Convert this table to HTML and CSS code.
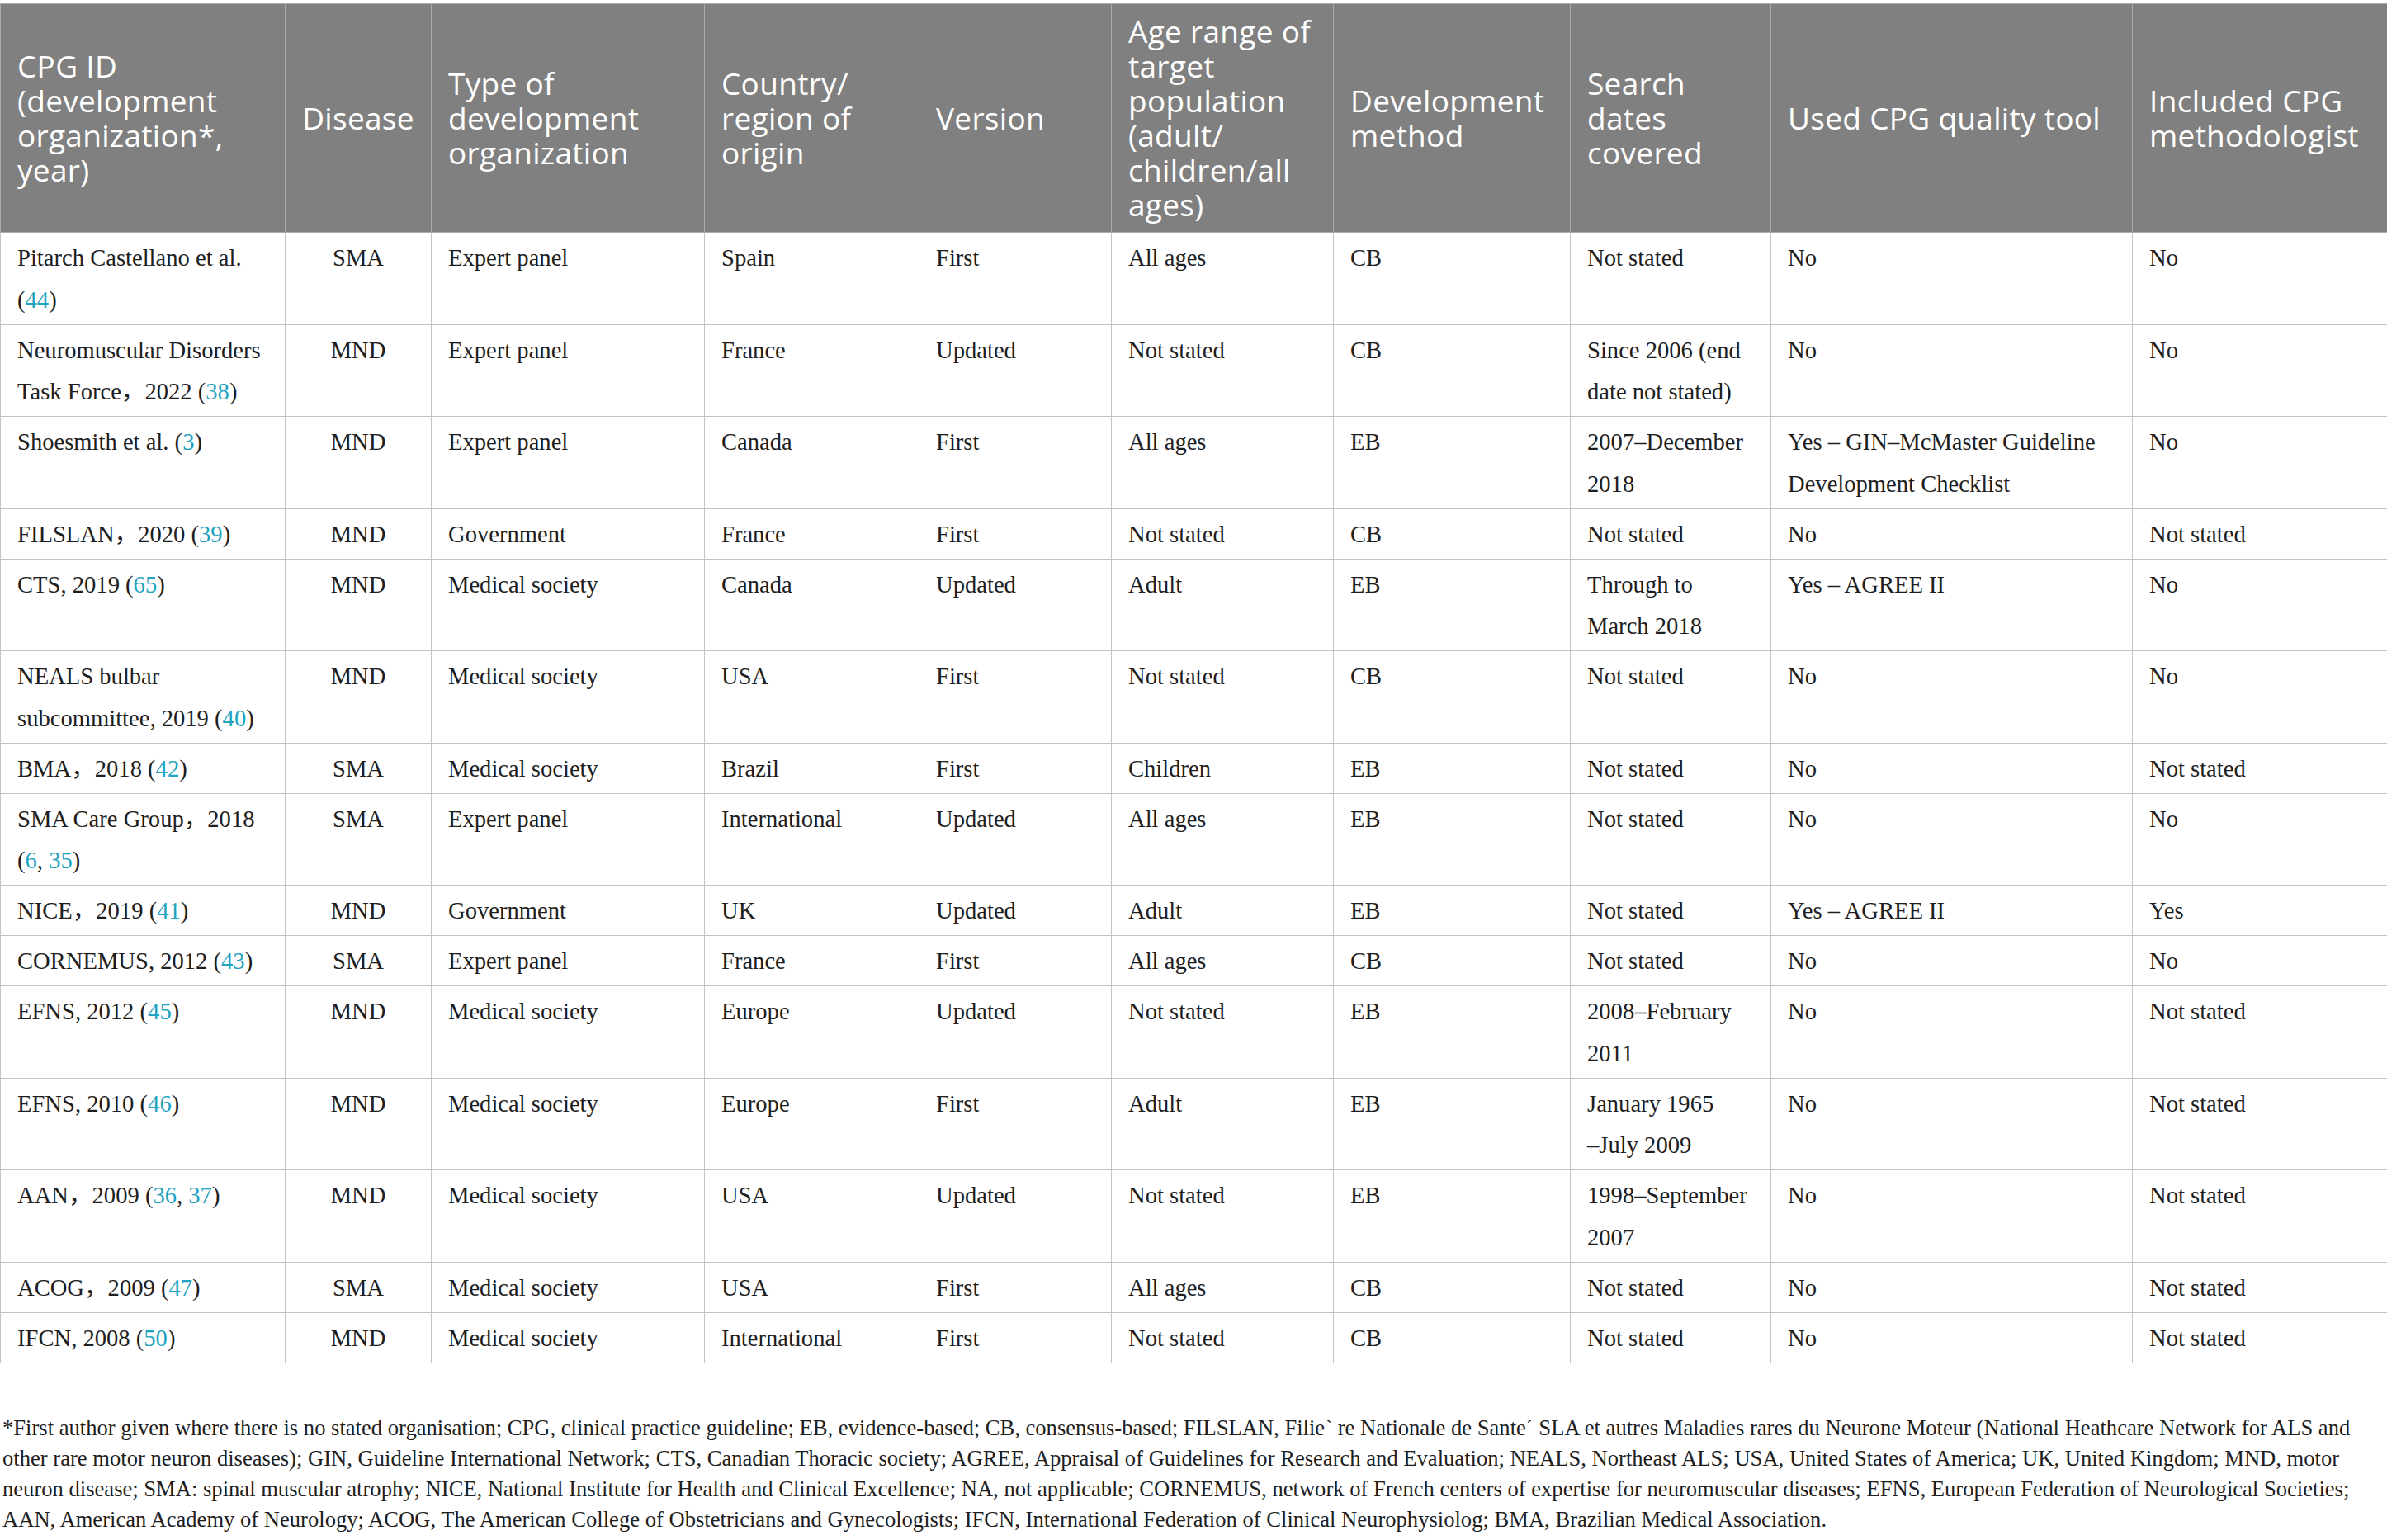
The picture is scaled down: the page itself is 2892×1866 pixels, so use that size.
FILE: index.html
```html
<!DOCTYPE html>
<html lang="en">
<head>
    <meta charset="UTF-8">
    <title>Clinical practice guidelines</title>
    <link rel="stylesheet" href="styles.css">
</head>
<body>
    <table class="cpg-table">
        <colgroup>
            <col class="c-id">
            <col class="c-disease">
            <col class="c-type">
            <col class="c-country">
            <col class="c-version">
            <col class="c-age">
            <col class="c-method">
            <col class="c-dates">
            <col class="c-tool">
            <col class="c-methodologist">
        </colgroup>
        <thead>
            <tr>
                <th>CPG ID (development organization*, year)</th>
                <th class="center">Disease</th>
                <th>Type of development organization</th>
                <th>Country/&#8203;region of origin</th>
                <th>Version</th>
                <th>Age range of target population (adult/&#8203;children/&#8203;all ages)</th>
                <th>Development method</th>
                <th>Search dates covered</th>
                <th>Used CPG quality tool</th>
                <th>Included CPG methodologist</th>
            </tr>
        </thead>
        <tbody>
            <tr>
                <td>Pitarch Castellano et al. <span class="cite">(<a href="#">44</a>)</span></td>
                <td class="center">SMA</td>
                <td>Expert panel</td>
                <td>Spain</td>
                <td>First</td>
                <td>All ages</td>
                <td>CB</td>
                <td>Not stated</td>
                <td>No</td>
                <td>No</td>
            </tr>
            <tr>
                <td>Neuromuscular Disorders <span class="nowrap">Task Force，2022 <span class="cite">(<a href="#">38</a>)</span></span></td>
                <td class="center">MND</td>
                <td>Expert panel</td>
                <td>France</td>
                <td>Updated</td>
                <td>Not stated</td>
                <td>CB</td>
                <td>Since 2006 (end date not stated)</td>
                <td>No</td>
                <td>No</td>
            </tr>
            <tr>
                <td>Shoesmith et al. <span class="cite">(<a href="#">3</a>)</span></td>
                <td class="center">MND</td>
                <td>Expert panel</td>
                <td>Canada</td>
                <td>First</td>
                <td>All ages</td>
                <td>EB</td>
                <td>2007–December 2018</td>
                <td>Yes – GIN–McMaster Guideline Development Checklist</td>
                <td>No</td>
            </tr>
            <tr>
                <td>FILSLAN，2020 <span class="cite">(<a href="#">39</a>)</span></td>
                <td class="center">MND</td>
                <td>Government</td>
                <td>France</td>
                <td>First</td>
                <td>Not stated</td>
                <td>CB</td>
                <td>Not stated</td>
                <td>No</td>
                <td>Not stated</td>
            </tr>
            <tr>
                <td>CTS, 2019 <span class="cite">(<a href="#">65</a>)</span></td>
                <td class="center">MND</td>
                <td>Medical society</td>
                <td>Canada</td>
                <td>Updated</td>
                <td>Adult</td>
                <td>EB</td>
                <td>Through to March 2018</td>
                <td>Yes – AGREE II</td>
                <td>No</td>
            </tr>
            <tr>
                <td>NEALS bulbar <span class="nowrap">subcommittee, 2019 <span class="cite">(<a href="#">40</a>)</span></span></td>
                <td class="center">MND</td>
                <td>Medical society</td>
                <td>USA</td>
                <td>First</td>
                <td>Not stated</td>
                <td>CB</td>
                <td>Not stated</td>
                <td>No</td>
                <td>No</td>
            </tr>
            <tr>
                <td>BMA，2018 <span class="cite">(<a href="#">42</a>)</span></td>
                <td class="center">SMA</td>
                <td>Medical society</td>
                <td>Brazil</td>
                <td>First</td>
                <td>Children</td>
                <td>EB</td>
                <td>Not stated</td>
                <td>No</td>
                <td>Not stated</td>
            </tr>
            <tr>
                <td>SMA Care Group，2018 <span class="cite">(<a href="#">6</a>, <a href="#">35</a>)</span></td>
                <td class="center">SMA</td>
                <td>Expert panel</td>
                <td>International</td>
                <td>Updated</td>
                <td>All ages</td>
                <td>EB</td>
                <td>Not stated</td>
                <td>No</td>
                <td>No</td>
            </tr>
            <tr>
                <td>NICE，2019 <span class="cite">(<a href="#">41</a>)</span></td>
                <td class="center">MND</td>
                <td>Government</td>
                <td>UK</td>
                <td>Updated</td>
                <td>Adult</td>
                <td>EB</td>
                <td>Not stated</td>
                <td>Yes – AGREE II</td>
                <td>Yes</td>
            </tr>
            <tr>
                <td>CORNEMUS, 2012 <span class="cite">(<a href="#">43</a>)</span></td>
                <td class="center">SMA</td>
                <td>Expert panel</td>
                <td>France</td>
                <td>First</td>
                <td>All ages</td>
                <td>CB</td>
                <td>Not stated</td>
                <td>No</td>
                <td>No</td>
            </tr>
            <tr>
                <td>EFNS, 2012 <span class="cite">(<a href="#">45</a>)</span></td>
                <td class="center">MND</td>
                <td>Medical society</td>
                <td>Europe</td>
                <td>Updated</td>
                <td>Not stated</td>
                <td>EB</td>
                <td>2008–February 2011</td>
                <td>No</td>
                <td>Not stated</td>
            </tr>
            <tr>
                <td>EFNS, 2010 <span class="cite">(<a href="#">46</a>)</span></td>
                <td class="center">MND</td>
                <td>Medical society</td>
                <td>Europe</td>
                <td>First</td>
                <td>Adult</td>
                <td>EB</td>
                <td>January 1965 –&#8288;July 2009</td>
                <td>No</td>
                <td>Not stated</td>
            </tr>
            <tr>
                <td>AAN，2009 <span class="cite">(<a href="#">36</a>, <a href="#">37</a>)</span></td>
                <td class="center">MND</td>
                <td>Medical society</td>
                <td>USA</td>
                <td>Updated</td>
                <td>Not stated</td>
                <td>EB</td>
                <td>1998–September 2007</td>
                <td>No</td>
                <td>Not stated</td>
            </tr>
            <tr>
                <td>ACOG，2009 <span class="cite">(<a href="#">47</a>)</span></td>
                <td class="center">SMA</td>
                <td>Medical society</td>
                <td>USA</td>
                <td>First</td>
                <td>All ages</td>
                <td>CB</td>
                <td>Not stated</td>
                <td>No</td>
                <td>Not stated</td>
            </tr>
            <tr>
                <td>IFCN, 2008 <span class="cite">(<a href="#">50</a>)</span></td>
                <td class="center">MND</td>
                <td>Medical society</td>
                <td>International</td>
                <td>First</td>
                <td>Not stated</td>
                <td>CB</td>
                <td>Not stated</td>
                <td>No</td>
                <td>Not stated</td>
            </tr>
        </tbody>
    </table>

    <p class="footnote">*First author given where there is no stated organisation; CPG, clinical practice guideline; EB, evidence-based; CB, consensus-based; FILSLAN, Filie` re Nationale de Sante´ SLA et autres Maladies rares du Neurone Moteur (National Heathcare Network for ALS and other rare motor neuron diseases); GIN, Guideline International Network; CTS, Canadian Thoracic society; AGREE, Appraisal of Guidelines for Research and Evaluation; NEALS, Northeast ALS; USA, United States of America; UK, United Kingdom; MND, motor neuron disease; SMA: spinal muscular atrophy; NICE, National Institute for Health and Clinical Excellence; NA, not applicable; CORNEMUS, network of French centers of expertise for neuromuscular diseases; EFNS, European Federation of Neurological Societies; AAN, American Academy of Neurology; ACOG, The American College of Obstetricians and Gynecologists; IFCN, International Federation of Clinical Neurophysiolog; BMA, Brazilian Medical Association.</p>
</body>
</html>
```

FILE: styles.css
```css
body {
    margin: 0;
    padding: 0;
    background: #ffffff;
    color: #1e1e1e;
    font-family: "Liberation Serif", "Noto Sans CJK SC", serif;
}
.cpg-table {
    width: 2892px;
    margin-top: 4px;
    border-collapse: collapse;
    table-layout: fixed;
    border: 1px solid #c4c4c4;
}
.c-id { width: 345px; }
.c-disease { width: 177px; }
.c-type { width: 331px; }
.c-country { width: 260px; }
.c-version { width: 233px; }
.c-age { width: 269px; }
.c-method { width: 287px; }
.c-dates { width: 243px; }
.c-tool { width: 438px; }
.c-methodologist { width: 309px; }
.cpg-table th {
    background: #7f807f;
    color: #ffffff;
    font-family: "Open Sans", "Noto Sans", sans-serif;
    font-weight: 400;
    font-size: 37px;
    letter-spacing: 0.3px;
    line-height: 42px;
    text-align: left;
    vertical-align: middle;
    padding: 12px 20px;
    border: 1px solid #a9aaa9;
}
.cpg-table td {
    font-size: 28.6px;
    line-height: 50.5px;
    vertical-align: top;
    padding: 6px 20px 3.5px;
    border: 1px solid #c4c4c4;
}
.cpg-table .center {
    text-align: center;
}
.cpg-table a {
    color: #1ea3c0;
    text-decoration: none;
}
.nowrap {
    white-space: nowrap;
}
.footnote {
    margin: 60px 0 0;
    padding: 0 30px 0 3px;
    font-size: 26.6px;
    line-height: 37.3px;
    color: #1e1e1e;
}
```
